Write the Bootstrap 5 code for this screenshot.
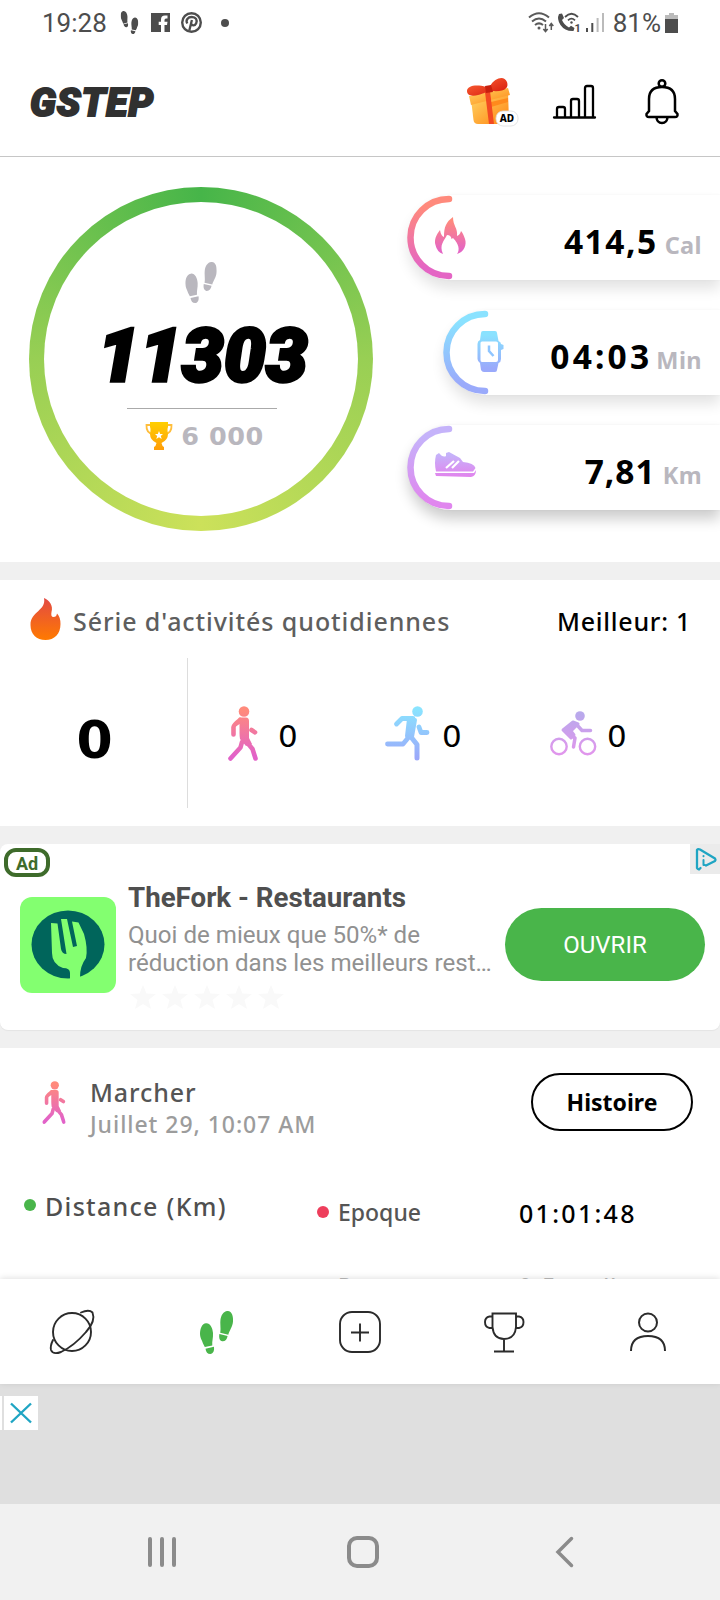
<!DOCTYPE html>
<html lang="fr">
<head>
<meta charset="utf-8">
<meta name="viewport" content="width=device-width, initial-scale=1">
<title>GSTEP</title>
<link href="https://cdn.jsdelivr.net/npm/bootstrap@5.3.0/dist/css/bootstrap.min.css" rel="stylesheet">
<style>
body{width:720px;height:1600px;overflow:hidden;background:#f0f0f0;font-family:"Noto Sans","Open Sans",sans-serif;color:#000}
svg{display:block;flex:none;overflow:visible}
.rb{font-family:Roboto,sans-serif}
.dj{font-family:"DejaVu Sans",sans-serif}
.lh-30{line-height:30px}
.statusbar{height:45px;padding:0 42px 0 42px;color:#4d4d4d;font-size:26px;line-height:45px}
.appbar{height:112px;padding:0 41px 0 30px;border-bottom:1px solid #c6c6c6}
.logo{font:italic 900 39px/1 Roboto,sans-serif;color:#303030;-webkit-text-stroke:2px #303030;letter-spacing:1px;padding-top:5px}
.overview{height:405px}
.goal-ring{width:344px;height:344px;margin:30px 0 0 29px;padding:15px;background:conic-gradient(#46b549,#98cf54 25%,#cce15a 50%,#98cf54 75%,#46b549)}
.steps{font:italic 900 74px/55px Roboto,sans-serif;-webkit-text-stroke:3.5px #000;letter-spacing:.4px;margin-top:25px;padding-left:4px}
.goal-line{width:150px;height:1px;background:#aaa;margin:25px 0 0 2px}
.goal-num{font-weight:700;font-size:25.5px;line-height:28px;color:#b9b7be}
.pills{width:312px;margin-top:38px}
.pill{height:85px;border-radius:43px 0 0 43px;margin-bottom:30px;box-shadow:0 9px 14px rgba(0,0,0,.11),0 0 3px rgba(0,0,0,.04);padding-right:18px}
.pill.strong{box-shadow:0 9px 14px rgba(0,0,0,.2),0 0 3px rgba(0,0,0,.05)}
.pill.inset{margin-left:36px}
.pill b{font-size:33.5px;line-height:1;letter-spacing:1.5px}
.pill.inset b{letter-spacing:3.2px}
.pill.strong b{letter-spacing:1px}
.pill i{font-style:normal;font-weight:700;font-size:23.5px;color:#b9b7be;letter-spacing:.4px;margin-left:7px}
.pill.inset i{margin-left:4px}
.pill-text{padding-top:13px}
.streak{height:246px;margin-top:18px}
.streak-head{height:78px;padding:5px 29px 0 30px;font-size:25px;font-weight:500}
.streak-title{color:#5e5e5e;letter-spacing:.93px;margin-left:12px}
.streak-body{height:150px}
.streak-total{width:189px;margin-right:-2px;font-weight:700;font-size:52px;padding-top:14px}
.vline{width:1px;background:#ddd}
.zero{font-size:31px;padding-top:7px;line-height:1}
.adcard{height:186px;margin-top:18px;border-radius:8px;box-shadow:0 1px 1px rgba(0,0,0,.05)}
.ad-tag{left:4px;top:4px;width:46px;height:29px;border:4px solid #3e6b2b;border-radius:12px;color:#3e6b2b;font-weight:700;font-size:18px;line-height:24px}
.ad-choice{right:0;top:0;width:30px;height:30px;background:#ebebeb}
.ad-logo{margin:53px 0 0 20px}
.ad-copy{margin:38px 0 0 12px;width:371px;white-space:nowrap}
.ad-title{font-weight:700;font-size:27.7px;line-height:32px;color:#4f4f4f}
.ad-desc{font-size:24.1px;line-height:28px;color:#919191;margin-top:7px}
.btn-open{width:200px;height:73px;margin:64px 0 0 6px;padding-top:2px;background:#49b54a;color:#fff;font-size:24px;border:0}
.activity{height:231px;margin-top:18px;overflow:hidden;font-weight:500}
.act-head{height:117px;padding:25px 27px 0 41px}
.act-name{font-size:25px;color:#555;letter-spacing:.9px;margin-top:4px}
.act-date{font-size:23px;line-height:32px;color:#9c9c9c;letter-spacing:.95px;margin-top:1px}
.btn-hist{width:162px;height:58px;border:2px solid #000;font-weight:700;font-size:23px}
.dot{width:12px;height:12px;border-radius:50%}
.act-grid{padding:25px 0 0 24px}
.tabs{height:105px;padding-top:1px;box-shadow:0 -1px 6px rgba(0,0,0,.12);position:relative}
.banner{height:120px;background:#dfdfdf;padding-top:12px}
.sysnav{height:96px;background:#f1f1f1;padding-left:147px}
</style>
</head>
<body>
<svg width="0" height="0" class="position-absolute">
 <defs>
  <linearGradient id="gp" x1="0" y1="0" x2="0" y2="1"><stop offset=".1" stop-color="#ff8a7c"/><stop offset=".9" stop-color="#e465c4"/></linearGradient>
  <linearGradient id="gb" x1="0" y1="0" x2="0" y2="1"><stop offset=".1" stop-color="#8ae2ff"/><stop offset=".9" stop-color="#9aaafb"/></linearGradient>
  <linearGradient id="gv" x1="0" y1="0" x2="0" y2="1"><stop offset=".1" stop-color="#c5b3fa"/><stop offset=".95" stop-color="#e086ee"/></linearGradient>
  <linearGradient id="wp" gradientUnits="userSpaceOnUse" x1="0" y1="5" x2="0" y2="50"><stop stop-color="#ff8a7c"/><stop offset="1" stop-color="#e262c8"/></linearGradient>
  <linearGradient id="wb" gradientUnits="userSpaceOnUse" x1="0" y1="3" x2="0" y2="52"><stop stop-color="#8ae4ff"/><stop offset="1" stop-color="#9ba8fa"/></linearGradient>
  <linearGradient id="wv" gradientUnits="userSpaceOnUse" x1="0" y1="3" x2="0" y2="42"><stop stop-color="#b9a9ec"/><stop offset="1" stop-color="#e096ec"/></linearGradient>
  <linearGradient id="fl" x1="0" y1="0" x2="0" y2="1"><stop stop-color="#e34a44"/><stop offset="1" stop-color="#ff7a00"/></linearGradient>
  <linearGradient id="au" x1="0" y1="0" x2="0" y2="1"><stop stop-color="#ffcf00"/><stop offset="1" stop-color="#ff9d0a"/></linearGradient>
  <linearGradient id="gf" x1="0" y1="0" x2="1" y2="1"><stop stop-color="#ffd968"/><stop offset="1" stop-color="#ff8412"/></linearGradient>
  <linearGradient id="rd" x1="0" y1="0" x2="1" y2="1"><stop stop-color="#ff6a3a"/><stop offset="1" stop-color="#d41408"/></linearGradient>
  <symbol id="feet" viewBox="0 0 33 43">
   <path d="M6 12.200C2 12.600 0 17.500 0 22.500C0 27 2 29 3 32.500L4.800 36L12.300 34.400C11.900 30 13.300 27 13 22C12.600 16.500 10 11.800 6 12.200ZM5.500 37.700L13.900 35.800C14.600 39.500 13.300 42.700 10.300 43C7.500 43 6 41 5.500 37.700Z"/>
   <path d="M28 0C24 -.3 20.800 4 20.400 9.500C20 14 21 17.500 20.200 21.700L28.300 23.700C29.300 19.500 32.600 16 33 10.500C33.300 5 32 .4 28 0ZM19.400 23L27.600 25C27 28.500 25 30.600 22.200 30.300C19.500 29.800 18.700 27 19.400 23Z"/>
  </symbol>
  <symbol id="walk" viewBox="0 0 30 55">
   <circle cx="16" cy="5.500" r="5.300" fill="url(#wp)"/>
   <g fill="none" stroke="url(#wp)" stroke-width="4.600" stroke-linecap="round" stroke-linejoin="round">
    <path d="M12 14Q5.500 19 5.500 21V28.500M23.500 24L27 26.300M14 36L12.500 41.500L2.500 52.500M17 34L24.500 43L27.500 52.500"/>
   </g>
   <path d="M11 11.500H18Q21 11.500 21 15V32L24 38L18 40L12 33Q11.500 30 11.500 27V18L7 21Z" fill="url(#wp)"/>
  </symbol>
 </defs>
</svg>

<div class="statusbar rb bg-white d-flex align-items-center">
 <span style="padding-top:1px">19:28</span>
 <svg width="19" height="23" viewBox="0 0 33 43" style="margin-left:13px" fill="#4d4d4d"><g transform="matrix(-1 0 0 1 33 0)"><use href="#feet" width="33" height="43"/></g></svg>
 <svg width="19" height="19" viewBox="0 0 19 19" style="margin-left:12px"><path fill="#4d4d4d" d="M0 0H19V19H13.500V12H16L16.500 8.700H13.500V7Q13.500 5.500 15 5.500H16.500V2.500H14Q10 2.500 10 6.600V8.700H7.700V12H10V19H0Z"/></svg>
 <svg width="21" height="21" viewBox="0 0 21 21" style="margin-left:11px"><circle cx="10.500" cy="10.500" r="9.300" fill="none" stroke="#4d4d4d" stroke-width="2.400"/><path d="M6.300 11.500C4.200 8 7 5 10.800 5C15 5 16.500 8.200 15.200 11.200C14 14 11 13.800 10.300 12M10.900 8L8.300 18.500" fill="none" stroke="#4d4d4d" stroke-width="2.300"/></svg>
 <svg width="8" height="8" style="margin-left:19px"><circle cx="4" cy="4" r="4" fill="#4d4d4d"/></svg>
 <svg class="ms-auto" width="26" height="21" viewBox="0 0 26 21" fill="none" stroke="#5a5a5a" stroke-width="2"><path d="M1 5.500Q11 -3 21 5.500M4 9.500Q11 3.500 18 9.500M7 13Q11 9.800 15 13"/><circle cx="11" cy="16" r="1.500" fill="#5a5a5a" stroke="none"/><path stroke-width="1.500" d="M17.500 12V19.500M15.300 17L17.500 19.500L19.700 17M23.300 18V11.500M21.300 14L23.300 11.500L25.300 14"/></svg>
 <svg width="25" height="21" viewBox="0 0 25 21" style="margin-left:3px"><path fill="#4d4d4d" d="M2 2L5 1.500L7 6L5 8Q7 13 12 15.500L14 13.800L17.500 16L16.500 19Q8 19.500 3.500 13Q-.5 7 2 2Z"/><path d="M8 5Q14.500 -1.500 21 5M11 8.300Q14.500 5 18 8.300" fill="none" stroke="#4d4d4d" stroke-width="1.800"/><circle cx="14.500" cy="10.500" r="1.200" fill="#4d4d4d"/><text x="17.500" y="19.500" font-size="11" font-weight="700" fill="#4d4d4d">1</text></svg>
 <svg width="18" height="19" viewBox="0 0 18 19" style="margin-left:4px"><path fill="#4d4d4d" d="M0 15H2V19H0ZM5.300 10H7.300V19H5.300Z"/><path fill="#bbb" d="M10.600 5H12.600V19H10.600ZM16 0H18V19H16Z"/></svg>
 <span style="margin-left:9px;padding-top:1px">81%</span>
 <svg width="13" height="20" viewBox="0 0 13 20" style="margin-left:4px"><path fill="#bbb" d="M4 0H9V2H13V6H0V2H4Z"/><path fill="#4d4d4d" d="M0 6H13V20H0Z"/></svg>
</div>

<header class="appbar bg-white d-flex align-items-center">
 <span class="logo">GSTEP</span>
 <svg class="ms-auto" width="52" height="50" viewBox="0 0 52 50" style="margin-top:3px">
  <path d="M5 22L42 15L43 44Q43 47 39 47H12Q8 47 7.500 43Z" fill="url(#gf)"/>
  <path d="M3 19L42 11L44 18L5 28Z" fill="url(#gf)"/><path d="M25 25L42 21V25L25 30Z" fill="#ff8a1c"/>
  <path d="M19 15L24 14L28 47H23Z" fill="#f24a22"/>
  <path d="M20 10C10 7 1 9 1 14C1 20 9 20 21 15L26 14C39 15 43 11 41 5C38 -2 29 1 24 9Z" fill="url(#rd)"/><path d="M19 9L25 8L27 15L20 16Z" fill="#c8200e"/>
  <rect x="30" y="34" width="22" height="15" rx="7" fill="#fff" stroke="#ddd" stroke-width=".8"/>
  <text x="41" y="45.300" text-anchor="middle" font-size="10" font-weight="800" fill="#000">AD</text>
 </svg>
 <svg width="44" height="34" viewBox="0 0 44 34" style="margin-left:35px;margin-top:2px" fill="none" stroke="#000" stroke-width="2.300"><path stroke-linecap="round" d="M1 32.500H42"/><path d="M4 32V24Q4 22 6 22H10Q12 22 12 24V32M18 32V16Q18 14 20 14H24Q26 14 26 16V32M32 32V3Q32 1 34 1H38Q40 1 40 3V32"/></svg>
 <svg width="34" height="46" viewBox="0 0 34 46" style="margin-left:48px;margin-top:3px" fill="none" stroke="#000" stroke-width="2.500"><circle cx="17" cy="4.500" r="3.300"/><path d="M4 32V20Q4 8 17 8Q30 8 30 20V32L32.500 35Q33 38 30 38H4Q1 38 1.500 35ZM11.500 38.500Q12 44 17 44Q22 44 22.500 38.500"/></svg>
</header>

<section class="overview bg-white d-flex justify-content-between">
 <div class="goal-ring rounded-circle"><div class="bg-white rounded-circle w-100 h-100 d-flex flex-column align-items-center">
  <svg width="32" height="41" viewBox="0 0 33 43" fill="#b9b7be" style="margin-top:60px"><use href="#feet" width="33" height="43"/></svg>
  <div class="steps">11303</div>
  <div class="goal-line"></div>
  <div class="d-flex align-items-center" style="margin:12px 0 0 7px">
   <svg width="28" height="28" viewBox="0 0 28 28"><path d="M6 3H1.500Q1 11 8 12M22 3H26.500Q27 11 20 12" fill="none" stroke="#ffbe3c" stroke-width="1.800"/><path fill="url(#au)" d="M5 0H23V5Q22 7 23 12Q23 18 16.500 21Q17 24 19 25V28H9V25Q11 24 11.500 21Q5 18 5 12Q6 7 5 5Z"/><path fill="#fff" d="M14 9L15.200 12H18L15.800 13.900L16.700 17L14 15.200L11.300 17L12.200 13.900L10 12H12.800Z"/></svg>
   <span class="goal-num dj" style="margin-left:8px;letter-spacing:.5px;padding-top:1px">6 000</span>
  </div>
 </div></div>
 <div class="pills">
  <div class="pill bg-white d-flex justify-content-between align-items-center">
   <svg width="68" height="85"><path d="M41 4A38.500 38.500 0 0 0 41 81" fill="none" stroke="url(#gp)" stroke-width="6.500" stroke-linecap="round"/><path fill="url(#gp)" d="M45 22C38 27 36 32 36 42Q33 41 32 35C28 40 26 45 27.500 50Q29 57 35 59C31 50 36 46 39 40Q43 40 43.500 44L45 43C51 49 52 55 49 59C56 57 59 50 57 44Q55 38 53 36Q52 40 49 41C50 33 45 31 45 22Z"/></svg>
   <div class="pill-text"><b>414,5</b><i>Cal</i></div>
  </div>
  <div class="pill inset bg-white d-flex justify-content-between align-items-center">
   <svg width="68" height="85"><path d="M41 4A38.500 38.500 0 0 0 41 81" fill="none" stroke="url(#gb)" stroke-width="6.500" stroke-linecap="round"/><path fill="url(#gb)" fill-rule="evenodd" d="M39 21H51Q53 21 53 23L54.500 31Q57 32 57 34L59.500 35V39L57 40V49Q57 52 54.500 53L53 60Q53 62 51 62H40Q38 62 37 60L36 53Q33.500 51 33.500 49V34Q33.500 31 36 30L37 23Q37 21 39 21ZM38 31.500Q36.500 31.500 36.500 33V50Q36.500 52 38 52H52Q54 52 54 50V33Q54 31.500 52 31.500Z"/><path d="M45 35.500V41L49.500 46" fill="none" stroke="#8fc5ff" stroke-width="2.500"/></svg>
   <div class="pill-text"><b>04:03</b><i>Min</i></div>
  </div>
  <div class="pill strong bg-white d-flex justify-content-between align-items-center mb-0">
   <svg width="68" height="85"><path d="M41 4A38.500 38.500 0 0 0 41 81" fill="none" stroke="url(#gv)" stroke-width="6.500" stroke-linecap="round"/><path fill="url(#gv)" d="M28 30L31 28Q35 33 38 31L38 28L41 27L52 33L55 37Q66 38 67.500 43L65 46.500H28Q26 38 28 30ZM27 48H66L68 45Q68 51 63 52L28 51Z"/><path d="M38 43L46 36M44 43L51 36" stroke="#fff" stroke-width="2.200"/></svg>
   <div class="pill-text"><b>7,81</b><i>Km</i></div>
  </div>
 </div>
</section>

<section class="streak bg-white">
 <div class="streak-head d-flex align-items-center">
  <svg width="31" height="42" viewBox="0 0 30 42" style="margin-top:-5px"><path fill="url(#fl)" d="M13.500 0C19 2 23 8 21 14Q20 19 23 19Q26 19 26.500 15.500Q30 19 30 26C30 36 24 42 15 42C6 42 0 36 0 27C0 13 16 13 13.500 0Z"/></svg>
  <span class="streak-title">Série d'activités quotidiennes</span>
  <span class="ms-auto" style="letter-spacing:.75px">Meilleur: 1</span>
 </div>
 <div class="streak-body d-flex">
  <div class="streak-total dj d-flex align-items-center justify-content-center">0</div>
  <div class="vline"></div>
  <div class="d-flex align-items-center" style="padding-left:40px">
   <svg width="30" height="55"><use href="#walk" width="30" height="55"/></svg>
   <span class="zero dj" style="margin-left:20px;width:107px">0</span>
   <svg width="44" height="55" viewBox="0 0 44 55" fill="none" stroke="url(#wb)" stroke-linecap="round" stroke-linejoin="round"><circle cx="32.500" cy="5.500" r="5.300" fill="url(#wb)" stroke="none"/><path stroke-width="4.800" d="M28 12.500H17L11.500 18M34 21L36 26.500H42M2.500 38H18L23 32"/><path stroke-width="5" d="M26 31L32 38.500V52"/><path fill="url(#wb)" stroke-width="4" d="M24 13L30 14L27 31L22 30Z"/></svg>
   <span class="zero dj" style="margin-left:13px;width:108px">0</span>
   <svg width="46" height="44" viewBox="0 0 46 44" fill="none" stroke="url(#wv)" stroke-linecap="round" stroke-linejoin="round"><circle cx="30" cy="5" r="4.800" fill="url(#wv)" stroke="none"/><circle cx="9" cy="35.500" r="7.700" stroke-width="2.400"/><circle cx="37.500" cy="35.500" r="7.700" stroke-width="2.400"/><path fill="url(#wv)" stroke-width="3" d="M13 19L23 11L28 13L21 20L24 24L21 27Z"/><path stroke-width="3.500" d="M27 14L32 19.500H40.500M19 23L25 27L23.500 36"/></svg>
   <span class="zero dj" style="margin-left:11px">0</span>
  </div>
 </div>
</section>

<section class="adcard rb bg-white position-relative d-flex align-items-start">
 <div class="ad-tag position-absolute text-center">Ad</div>
 <div class="ad-choice position-absolute"><svg width="30" height="30" fill="none" stroke="#1fa5c3" stroke-width="2.300" stroke-linejoin="round" stroke-linecap="round"><path d="M10.500 24L9 25.500Q7.500 25 7 24V6Q8 4.500 10 5.500L25 14.500Q26 16 25 17L16 21.500"/><path d="M13.500 16V21H15M13.500 12V12.300" stroke-width="2"/></svg></div>
 <svg class="ad-logo" width="96" height="96"><rect width="96" height="96" rx="12" fill="#83ff70"/><ellipse cx="48" cy="47.500" rx="36.500" ry="34" fill="#00655b"/><path fill="#83ff70" d="M31 26L37.500 26.500L41 52Q42 57 46.500 57L41 22L47 22L53 50L57 49L52 24.500L58.500 25.500L64 37Q68 51 66 61Q60 69 60 80L61 84H50V76Q50 71 43 71Q32 67 32 56Z"/></svg>
 <div class="ad-copy">
  <div class="ad-title">TheFork - Restaurants</div>
  <div class="ad-desc">Quoi de mieux que 50%* de<br>réduction dans les meilleurs rest…</div>
  <svg width="160" height="24" style="margin:8px 0 0 2px" fill="#f9f9f9"><defs><path id="st" d="M13 0L16.500 8.500L26 9L18.500 15L21 24L13 19L5 24L7.500 15L0 9L9.500 8.500Z"/></defs><use href="#st"/><use href="#st" x="32"/><use href="#st" x="64"/><use href="#st" x="96"/><use href="#st" x="128"/></svg>
 </div>
 <button class="btn-open rounded-pill">OUVRIR</button>
</section>

<section class="activity bg-white">
 <div class="act-head d-flex align-items-start">
  <svg width="26" height="43" viewBox="0 0 30 55" style="margin-top:8px"><use href="#walk" width="30" height="55"/></svg>
  <div style="margin-left:23px"><div class="act-name lh-30">Marcher</div><div class="act-date">Juillet 29, 10:07 AM</div></div>
  <button class="btn-hist rounded-pill bg-white ms-auto p-0">Histoire</button>
 </div>
 <div class="act-grid d-flex">
  <div class="d-flex align-items-start" style="width:293px"><span class="dot" style="background:#49b54a;margin-top:9px"></span><span class="lh-30" style="margin:1px 0 0 9px;font-size:25px;color:#4f4f4f;letter-spacing:1.3px">Distance (Km)</span></div>
  <div style="width:202px;margin-top:6px">
   <div class="d-flex lh-30"><span class="dot" style="background:#ee3e5c;margin-top:10px"></span><span style="margin:1px 0 0 9px;font-size:23px;color:#555">Epoque</span></div>
   <div class="lh-30" style="margin:43px 0 0 21px;font-size:22px;color:#bbb">Pas</div>
  </div>
  <div style="margin-top:8px;font-size:25px"><div class="lh-30" style="letter-spacing:2.300px">01:01:48</div><div class="lh-30" style="margin-top:42px;font-size:22px;letter-spacing:2.500px;color:#bbb">0 Foot/h</div></div>
 </div>
</section>

<nav class="tabs bg-white row g-0 align-items-center">
 <div class="col d-flex justify-content-center"><svg width="44" height="44" fill="none" stroke="#2b2b2b" stroke-width="1.900" stroke-linecap="round"><circle cx="22" cy="22" r="19"/><path d="M31 2.500Q39 -1 42.500 2.500Q46 11 36 22Q24 36 11 42Q3 45 1 40Q0 36 3 30"/></svg></div>
 <div class="col d-flex justify-content-center"><svg width="33" height="43" fill="#49b54a"><use href="#feet" width="33" height="43"/></svg></div>
 <div class="col d-flex justify-content-center"><svg width="42" height="42" fill="none" stroke="#2b2b2b" stroke-width="1.900"><rect x="1" y="1" width="40" height="40" rx="12"/><path d="M21 12.500V30.500M12 21.500H30"/></svg></div>
 <div class="col d-flex justify-content-center"><svg width="40" height="41" fill="none" stroke="#2b2b2b" stroke-width="1.900"><path d="M8.500 1.500H32V15Q31 27 20 27Q9.500 27 8.500 15ZM20 27V39.500M10 39.500H30M8.500 4.500H5.500Q1 5.500 1 10Q1 15 5.500 16H8.500M32 4.500H35Q39.500 5.500 39.500 10Q39.500 15 35 16H32"/></svg></div>
 <div class="col d-flex justify-content-center"><svg width="36" height="38" fill="none" stroke="#2b2b2b" stroke-width="2"><circle cx="18" cy="9.500" r="9"/><path d="M1 38Q1 23 18 23Q35 23 35 38"/></svg></div>
</nav>

<div class="banner d-flex align-items-start">
 <span class="bg-white" style="width:2px;height:34px"></span>
 <svg width="34" height="34" class="bg-white" style="margin-left:2px"><path d="M7 7.500L27 26.500M27 7.500L7 26.500" stroke="#1fa5c3" stroke-width="2.400"/></svg>
</div>

<div class="sysnav d-flex align-items-center">
 <svg width="30" height="30" stroke="#8b8b8b" stroke-width="4" stroke-linecap="round"><path d="M3 2V28M15 2V28M27 2V28"/></svg>
 <svg width="32" height="32" style="margin-left:170px" fill="none" stroke="#8b8b8b" stroke-width="4"><rect x="2" y="2" width="28" height="28" rx="8"/></svg>
 <svg width="17" height="30" style="margin-left:177px" fill="none" stroke="#8b8b8b" stroke-width="3.500" stroke-linecap="round"><path d="M15.500 1.500L2 15L15.500 28.500"/></svg>
</div>
<script src="https://cdn.jsdelivr.net/npm/bootstrap@5.3.0/dist/js/bootstrap.bundle.min.js"></script>
</body>
</html>
